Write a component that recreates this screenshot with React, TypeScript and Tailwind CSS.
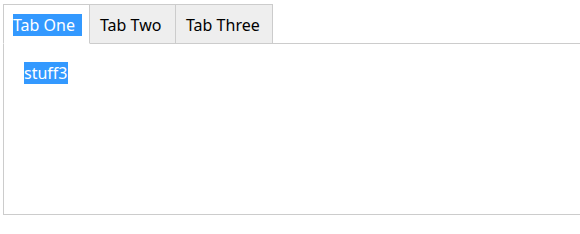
import React, { useState } from 'react';

const tabs = [
  { id: 0, label: 'Tab One', width: 'w-[87px] border-l', content: 'stuff1' },
  { id: 1, label: 'Tab Two', width: 'w-[86px]', content: 'stuff2' },
  { id: 2, label: 'Tab Three', width: 'w-[97px]', content: 'stuff3' },
];

export default function App() {
  const [active, setActive] = useState(0);

  return (
    <div
      className="w-[580px] h-[234px] overflow-hidden bg-white pl-[3px] pt-[4px] text-[16px] leading-[21px] text-black"
      style={{ fontFamily: '"Noto Sans", "Open Sans", Arial, sans-serif' }}
    >
      <ul className="flex">
        {tabs.map((tab) => {
          const isActive = tab.id === active;
          return (
            <li
              key={tab.id}
              onClick={() => setActive(tab.id)}
              className={`${tab.width} h-[40px] -mb-px cursor-pointer border-t border-r border-[#cccccc] pt-[10px] pl-[9px] ${
                isActive ? 'bg-white border-b border-b-white' : 'bg-[#eeeeee] border-b pl-[10px]'
              }`}
            >
              {isActive ? (
                <span className="bg-[#3399ff] text-white pr-[7px]">{tab.label}</span>
              ) : (
                <span>{tab.label}</span>
              )}
            </li>
          );
        })}
      </ul>
      <div className="h-[172px] border-t border-l border-b border-[#cccccc] pt-[19px] pl-[20px]">
        <span className="bg-[#3399ff] text-white">stuff3</span>
      </div>
    </div>
  );
}
